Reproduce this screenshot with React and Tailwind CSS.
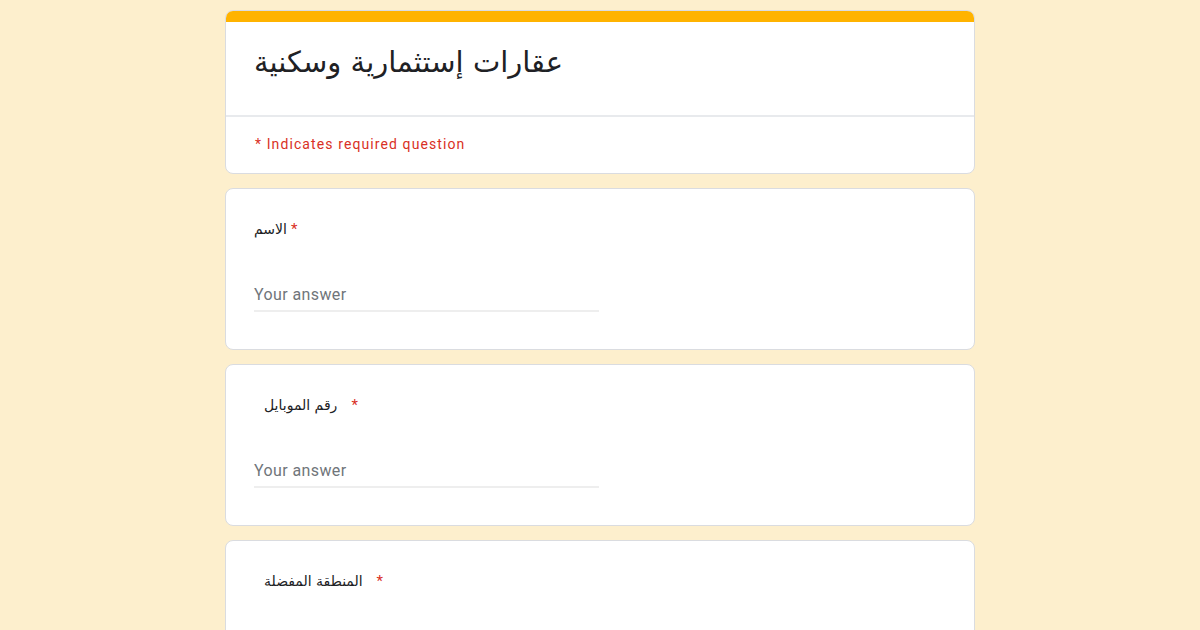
const arabic = { fontFamily: '"DejaVu Sans", "Noto Sans", sans-serif' }

function Question({ label, labelClass = '', starClass = 'ml-[6px]', withInput = true }) {
  return (
    <div className="shrink-0 w-[750px] bg-white border border-[#dadce0] rounded-lg px-[28px] pt-[28px] pb-[37px]">
      <div className="flex items-center h-[24px]">
        <span className={`text-[14px] text-[#202124] ${labelClass}`} style={arabic}>{label}</span>
        <span className={`text-[15px] text-[#d93025] ${starClass}`} style={{ fontFamily: 'Roboto, sans-serif' }}>*</span>
      </div>
      {withInput && (
        <div className="mt-[42px] w-[345px] border-b-2 border-[#eeeeee] pb-[3px]">
          <div className="text-[16px] text-[#70757a] leading-[24px] tracking-[0.4px]" style={{ fontFamily: 'Roboto, sans-serif' }}>Your answer</div>
        </div>
      )}
    </div>
  )
}

export default function App() {
  return (
    <div className="h-[630px] overflow-hidden bg-[#fdefcd] flex flex-col items-center pt-[10px] gap-[14px]">
      <div className="shrink-0 w-[750px] bg-white border border-[#dadce0] rounded-lg overflow-hidden">
        <div className="h-[12px] bg-[#ffb300] -mx-px -mt-px"></div>
        <div className="px-[28px] pt-[18px] h-[95px] border-b-2 border-[#e8eaed]">
          <h1 className="text-[29px] text-[#202124] leading-[44px] text-left" style={arabic}>عقارات إستثمارية وسكنية</h1>
        </div>
        <div className="px-[29px] pt-[14px] pb-[18px]">
          <span className="text-[14px] text-[#d93025] tracking-[1.1px]" style={{ fontFamily: 'Roboto, sans-serif' }}>* Indicates required question</span>
        </div>
      </div>
      <Question label="الاسم" starClass="ml-[4px]" />
      <Question label="رقم الموبايل" labelClass="ml-[10px]" starClass="ml-[14px]" />
      <Question label="المنطقة المفضلة" labelClass="ml-[10px]" starClass="ml-[14px]" />
    </div>
  )
}
